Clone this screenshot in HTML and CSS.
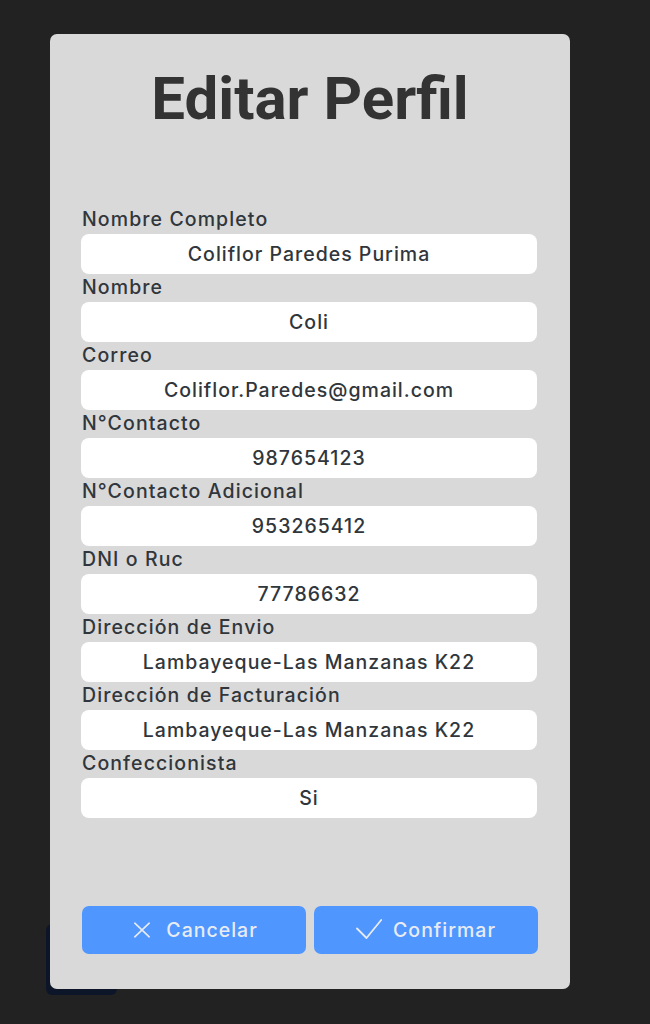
FILE: index.html
```html
<!DOCTYPE html>
<html lang="es">
<head>
<meta charset="utf-8">
<title>Editar Perfil</title>
<link rel="stylesheet" href="styles.css">
</head>
<body>
<div class="page">
  <div class="backdrop-tab"></div>
  <div class="modal">
    <h1 class="title">Editar Perfil</h1>
    <div class="fields">
      <div class="field"><div class="label">Nombre Completo</div><div class="input">Coliflor Paredes Purima</div></div>
      <div class="field"><div class="label">Nombre</div><div class="input">Coli</div></div>
      <div class="field"><div class="label">Correo</div><div class="input">Coliflor.Paredes@gmail.com</div></div>
      <div class="field"><div class="label">N°Contacto</div><div class="input">987654123</div></div>
      <div class="field"><div class="label">N°Contacto Adicional</div><div class="input">953265412</div></div>
      <div class="field"><div class="label">DNI o Ruc</div><div class="input">77786632</div></div>
      <div class="field"><div class="label">Dirección de Envio</div><div class="input">Lambayeque-Las Manzanas K22</div></div>
      <div class="field"><div class="label">Dirección de Facturación</div><div class="input">Lambayeque-Las Manzanas K22</div></div>
      <div class="field"><div class="label">Confeccionista</div><div class="input">Si</div></div>
    </div>
    <div class="actions">
      <button class="btn btn-cancel">
        <svg class="icon-x" width="24" height="24" viewBox="0 0 24 24" fill="none" stroke="currentColor" stroke-width="1.6" stroke-linecap="round"><path d="M4.8 5.2L19.2 18.8M19.2 5.2L4.8 18.8"/></svg>
        <span>Cancelar</span>
      </button>
      <button class="btn btn-confirm">
        <svg class="icon-check" width="26" height="20" viewBox="0 0 26 20" fill="none" stroke="currentColor" stroke-width="1.8" stroke-linecap="round" stroke-linejoin="round"><path d="M1 9.5L10.5 19L25.2 1"/></svg>
        <span>Confirmar</span>
      </button>
    </div>
  </div>
</div>
</body>
</html>
```

FILE: styles.css
```css
html, body {
  margin: 0;
  padding: 0;
}
body {
  background: #222222;
  width: 650px;
  height: 1024px;
  overflow: hidden;
}
.page {
  position: relative;
  padding: 34px 0 0 50px;
}
.backdrop-tab {
  position: absolute;
  left: 46px;
  top: 924px;
  width: 71px;
  height: 71px;
  background: #0d1628;
  border-radius: 6px;
}
.modal {
  position: relative;
  width: 520px;
  height: 955px;
  background: #d9d9d9;
  border-radius: 7px;
  box-sizing: border-box;
  padding: 35px 33px 0 31px;
  display: flex;
  flex-direction: column;
}
.title {
  margin: 0;
  font-family: Roboto, "Liberation Sans", sans-serif;
  font-weight: 700;
  font-size: 60px;
  line-height: 60px;
  color: #333333;
  text-align: center;
  padding-left: 2px;
}
.fields {
  margin-top: 77px;
  display: flex;
  flex-direction: column;
}
.field {
  display: flex;
  flex-direction: column;
}
.label {
  height: 28px;
  line-height: 27px;
  font-family: Inter, "Noto Sans", sans-serif;
  font-weight: 500;
  font-size: 19.5px;
  letter-spacing: 1.1px;
  color: #30363b;
  padding-left: 1px;
  white-space: nowrap;
}
.input {
  height: 40px;
  line-height: 40px;
  background: #ffffff;
  border-radius: 8px;
  text-align: center;
  font-family: Inter, "Noto Sans", sans-serif;
  font-weight: 500;
  font-size: 19.5px;
  letter-spacing: 1px;
  color: #30363b;
  white-space: nowrap;
}
.actions {
  margin-top: 88px;
  display: flex;
  gap: 8px;
  padding-left: 1px;
}
.btn {
  flex: 0 0 224px;
  height: 48px;
  border: none;
  border-radius: 7px;
  background: #4f96ff;
  color: #e8ecf2;
  display: flex;
  align-items: center;
  justify-content: center;
  font-family: Inter, "Noto Sans", sans-serif;
  font-weight: 500;
  font-size: 19.5px;
  letter-spacing: 1px;
  padding: 0;
}
.btn-cancel {
  gap: 12px;
}
.btn-confirm {
  gap: 11px;
}
.icon-check {
  margin-top: -2px;
}
```
